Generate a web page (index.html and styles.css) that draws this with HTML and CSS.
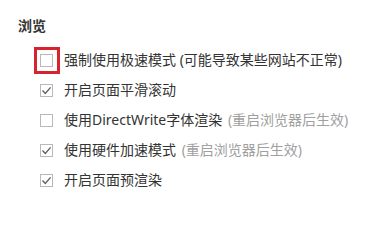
FILE: index.html
```html
<!DOCTYPE html>
<html lang="zh-CN">
<head>
<meta charset="utf-8">
<link rel="stylesheet" href="styles.css">
</head>
<body>
<section class="section">
  <h2 class="heading">浏览</h2>
  <div class="row">
    <span class="box highlighted"></span>
    <span class="label">强制使用极速模式 (可能导致某些网站不正常)</span>
  </div>
  <div class="row">
    <span class="box"><svg viewBox="0 0 13 13" width="13" height="13"><polyline points="2.5,6.5 5.3,9.4 10.6,3.4" /></svg></span>
    <span class="label">开启页面平滑滚动</span>
  </div>
  <div class="row">
    <span class="box"></span>
    <span class="label">使用DirectWrite字体渲染 <span class="hint">(重启浏览器后生效)</span></span>
  </div>
  <div class="row">
    <span class="box"><svg viewBox="0 0 13 13" width="13" height="13"><polyline points="2.5,6.5 5.3,9.4 10.6,3.4" /></svg></span>
    <span class="label">使用硬件加速模式 <span class="hint">(重启浏览器后生效)</span></span>
  </div>
  <div class="row">
    <span class="box"><svg viewBox="0 0 13 13" width="13" height="13"><polyline points="2.5,6.5 5.3,9.4 10.6,3.4" /></svg></span>
    <span class="label">开启页面预渲染</span>
  </div>
</section>
</body>
</html>
```
FILE: styles.css
```css
html, body {
  margin: 0;
  padding: 0;
  background: #ffffff;
}
body {
  width: 385px;
  height: 207px;
  overflow: hidden;
  font-family: "Noto Sans", "Noto Sans CJK SC", sans-serif;
  font-size: 14px;
  color: #333333;
}
.section {
  padding: 12px 0 0 18px;
}
.heading {
  margin: 0 0 5px 0;
  font-size: 14px;
  line-height: 28px;
  font-weight: 700;
  color: #333333;
}
.row {
  display: flex;
  align-items: center;
  height: 30px;
  padding-left: 22px;
}
.box {
  position: relative;
  box-sizing: border-box;
  width: 13px;
  height: 13px;
  border: 1px solid #b9b9b9;
  background: #ffffff;
  flex: none;
  margin-right: 11px;
}
.box svg {
  position: absolute;
  left: -1px;
  top: -1px;
}
.box polyline {
  fill: none;
  stroke: #606060;
  stroke-width: 1.4;
}
.highlighted::after {
  content: "";
  position: absolute;
  left: -7px;
  top: -8px;
  width: 26px;
  height: 27px;
  box-sizing: border-box;
  border: 3px solid #d7232d;
}
.label {
  line-height: 20px;
  white-space: nowrap;
}
.hint {
  color: #a0a0a0;
  margin-left: 2px;
}
```
